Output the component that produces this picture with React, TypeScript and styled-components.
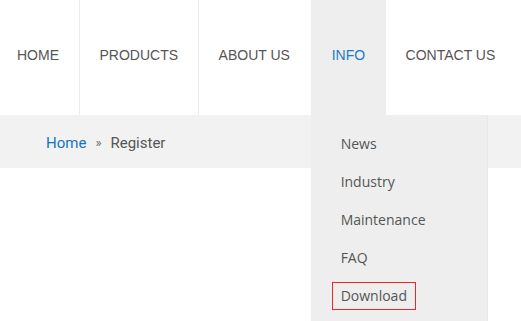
import React from 'react'
import styled, { createGlobalStyle } from 'styled-components'

const GlobalStyle = createGlobalStyle`
  body {
    margin: 0;
    background: #fff;
    font-family: 'Liberation Sans', Arial, sans-serif;
  }
`

const Page = styled.div`
  width: 521px;
  height: 321px;
  overflow: hidden;
`

const NavBar = styled.nav`
  display: flex;
  height: 115px;
  background: #fff;
  position: relative;
  z-index: 2;
`

const NavItem = styled.div<{ $active?: boolean; $divider?: boolean; $first?: boolean }>`
  position: relative;
  display: flex;
  align-items: center;
  padding: 0 19.75px 6px;
  padding-left: ${props => (props.$first ? '17px' : props.$active ? '21px' : '19.75px')};
  border-right: 1px solid ${props => (props.$divider ? '#ececec' : 'transparent')};
  background: ${props => (props.$active ? '#eeeeee' : 'transparent')};
  color: ${props => (props.$active ? '#1a7bc4' : '#555')};
  font-size: 14px;
  white-space: nowrap;
`

const Dropdown = styled.ul`
  position: absolute;
  top: 100%;
  left: 0;
  width: 176px;
  margin: 0;
  padding: 10px 0 20px;
  list-style: none;
  background: #eeeeee;
  box-shadow: 1px 0 0 #e8e8e8;
  font-family: 'Open Sans', sans-serif;
  font-size: 14px;
  color: #555;
`

const DropdownItem = styled.li`
  height: 38px;
  display: flex;
  align-items: center;
  padding-left: 21px;
`

const DropdownLink = styled.span<{ $focused?: boolean }>`
  display: inline-block;
  padding: 3px 8px 4px;
  border: 1px solid ${props => (props.$focused ? '#e8282d' : 'transparent')};
`

const Breadcrumb = styled.div`
  display: flex;
  align-items: center;
  height: 53px;
  padding: 2px 0 0 46px;
  box-sizing: border-box;
  background: #f2f2f2;
  font-family: Roboto, sans-serif;
  font-size: 15px;
  color: #555;
`

const CrumbLink = styled.span`
  color: #1274c0;
`

const Separator = styled.span`
  margin: 0 9px;
  font-size: 13px;
  color: #666;
`

const menuItems = ['News', 'Industry', 'Maintenance', 'FAQ', 'Download']

export default function App() {
  return (
    <Page>
      <GlobalStyle />
      <NavBar>
        <NavItem $first $divider>HOME</NavItem>
        <NavItem $divider>PRODUCTS</NavItem>
        <NavItem>ABOUT US</NavItem>
        <NavItem $active>
          INFO
          <Dropdown>
            {menuItems.map(item => (
              <DropdownItem key={item}>
                <DropdownLink $focused={item === 'Download'}>{item}</DropdownLink>
              </DropdownItem>
            ))}
          </Dropdown>
        </NavItem>
        <NavItem>CONTACT US</NavItem>
      </NavBar>
      <Breadcrumb>
        <CrumbLink>Home</CrumbLink>
        <Separator>»</Separator>
        <span>Register</span>
      </Breadcrumb>
    </Page>
  )
}
